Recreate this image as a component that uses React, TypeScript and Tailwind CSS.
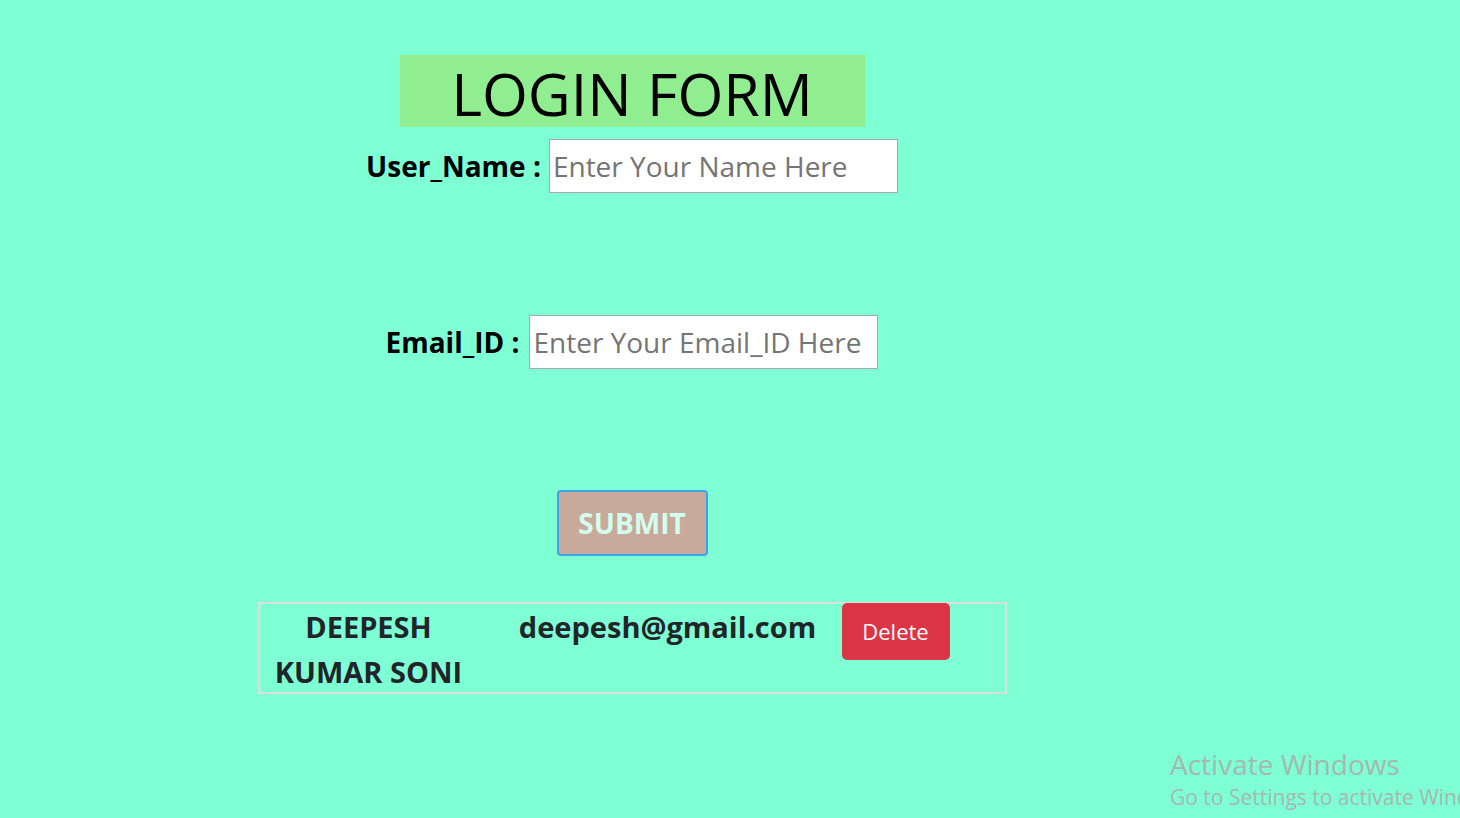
export default function App() {
  return (
    <div
      className="relative min-h-[818px] w-full overflow-hidden bg-[#7fffd4]"
      style={{ fontFamily: '"Open Sans", "Noto Sans", sans-serif' }}
    >
      <div className="flex w-[1264px] flex-col items-center">
        <h1 className="mt-[55px] flex h-[72px] w-[465px] items-center justify-center bg-[#90ee90] pt-[4px] text-[59px] font-normal leading-none text-black">
          LOGIN FORM
        </h1>

        <div className="mt-[12px] flex items-center gap-[8px]">
          <label className="text-[28px] font-bold text-black">User_Name :</label>
          <input
            className="h-[54px] w-[349px] border border-[#a9a9a9] bg-white px-[3px] text-[28px] text-black outline-none placeholder:text-[#757575]"
            placeholder="Enter Your Name Here"
          />
        </div>

        <div className="mt-[122px] flex items-center gap-[10px]">
          <label className="text-[28px] font-bold text-black">Email_ID :</label>
          <input
            className="h-[54px] w-[349px] border border-[#a9a9a9] bg-white px-[3px] text-[28px] text-black outline-none placeholder:text-[#757575]"
            placeholder="Enter Your Email_ID Here"
          />
        </div>

        <button className="mt-[121px] h-[66px] w-[151px] rounded-[4px] border-2 border-[#3ea2ec] bg-[#c8aa9b] text-[28px] font-bold text-[#d2fff0]">
          SUBMIT
        </button>

        <div className="mt-[46px] flex h-[92px] w-[749px] items-start border-2 border-[#dedede] text-[#212529]">
          <div className="w-[218px] text-center text-[29px] font-bold leading-[45px]">
            DEEPESH KUMAR SONI
          </div>
          <div className="w-[364px] pl-[16px] text-center text-[29px] font-bold leading-[45px]">
            deepesh@gmail.com
          </div>
          <button className="-mt-px h-[57px] w-[108px] rounded-[5px] bg-[#dc3545] text-[22px] text-white">
            Delete
          </button>
        </div>
      </div>

      <div className="pointer-events-none absolute left-[1170px] top-[745px] whitespace-nowrap text-[#a5b8b1]">
        <div className="text-[28px] leading-[38px]">Activate Windows</div>
        <div className="text-[21px] leading-[28px]">Go to Settings to activate Windows.</div>
      </div>
    </div>
  );
}
